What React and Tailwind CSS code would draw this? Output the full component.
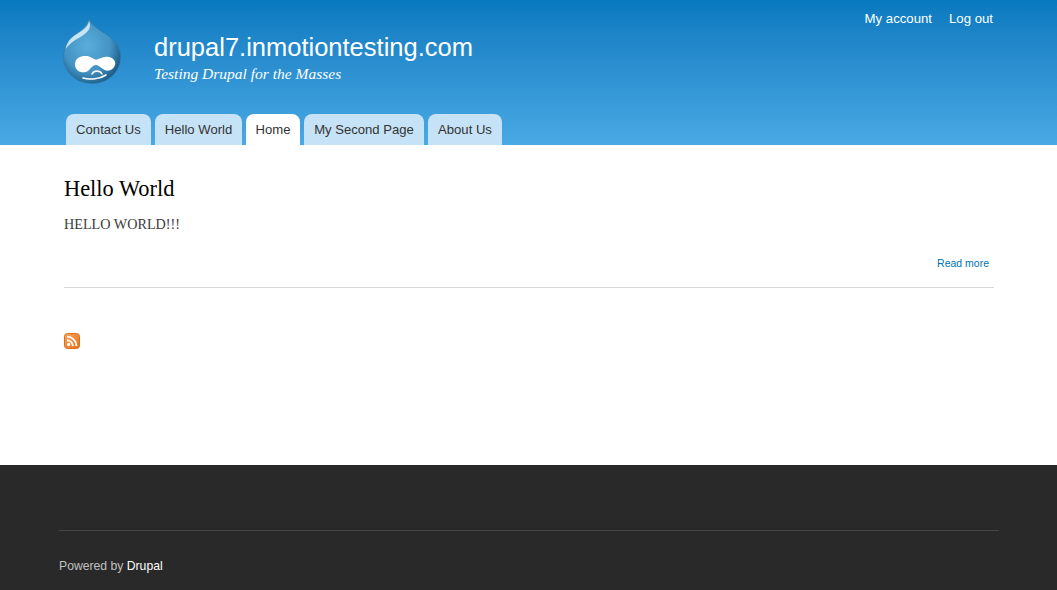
const sans = "font-['Liberation_Sans',Arial,sans-serif]";
const serif = "font-['Liberation_Serif','Times_New_Roman',serif]";

function Logo() {
  return (
    <svg width="60" height="68" viewBox="0 0 60 68" className="block">
      <defs>
        <radialGradient id="drop" cx="0.42" cy="0.42" r="0.62">
          <stop offset="0" stopColor="#5aaedb" />
          <stop offset="0.65" stopColor="#4393c4" />
          <stop offset="1" stopColor="#1d5f8a" />
        </radialGradient>
      </defs>
      <path d="M26 0 C27 6 34 10 41 15 C51 21 57.500 28 57.500 39 C57.500 54 45 65.500 29 65.500 C13 65.500 0.500 54 0.500 39 C0.500 27 7 20 14 15 C20 11 25 7 26 0 Z" fill="url(#drop)" stroke="#2f78a4" strokeWidth="0.6" />
      <path d="M26 3 C25 9 20 12 14 16 C8 19 4 24 2.500 31 C8 24 14 21 19 18 C25 14 29 10 26 3 Z" fill="#d4ecf8" opacity="0.9" />
      <path d="M12 46 C12 40 18 37.500 24 38 C28 38.500 31 42 34 41.500 C38 40 42 38 46 39 C51 40 53 44 52 47 C50 53 44 54 40 51 C37 49 35 47 33 47 C30 47 28 50 25 53 C20 56 12 54 12 46 Z" fill="#fff" />
      <path d="M20 60 C27 62 37 61 43 57" fill="none" stroke="#fff" strokeWidth="1.600" strokeLinecap="round" />
      <path d="M29 56 C31 52 37 52 39 56" fill="none" stroke="#fff" strokeWidth="1.500" strokeLinecap="round" />
    </svg>
  );
}

function Rss() {
  return (
    <svg width="16" height="16" viewBox="0 0 16 16" className="block">
      <defs>
        <linearGradient id="rss" x1="0" y1="0" x2="1" y2="1">
          <stop offset="0" stopColor="#f9a35a" />
          <stop offset="1" stopColor="#e8731c" />
        </linearGradient>
      </defs>
      <rect x="0.5" y="0.5" width="15" height="15" rx="3" fill="url(#rss)" stroke="#d9701f" />
      <circle cx="4.6" cy="11.4" r="1.6" fill="#fff" />
      <path d="M3 7.2 A5.8 5.8 0 0 1 8.8 13" fill="none" stroke="#fff" strokeWidth="1.9" />
      <path d="M3 3.6 A9.4 9.4 0 0 1 12.4 13" fill="none" stroke="#fff" strokeWidth="1.9" />
    </svg>
  );
}

const tabs = [
  ["Contact Us", "w-[85px]", false],
  ["Hello World", "w-[87px]", false],
  ["Home", "w-[54px]", true],
  ["My Second Page", "w-[120px]", false],
  ["About Us", "w-[74px]", false],
];

export default function App() {
  return (
    <div className={`${sans} w-full min-h-[590px] bg-white`}>
      <header className="h-[145px] bg-gradient-to-b from-[#0779bf] to-[#48a9e4] flex flex-col">
        <div className="h-[114px] pl-[63px] pr-[64px] flex items-start">
          <div className="mt-[18px]"><Logo /></div>
          <div className="ml-[31px] mt-[32px] text-white">
            <div className="text-[25.5px] leading-[30px]">drupal7.inmotiontesting.com</div>
            <div className={`${serif} italic text-[15.5px] leading-[18px] mt-[3px]`}>Testing Drupal for the Masses</div>
          </div>
          <nav className="ml-auto mt-[11px] flex gap-[17px] text-white text-[13.2px] leading-[16px]">
            <span>My account</span>
            <span>Log out</span>
          </nav>
        </div>
        <nav className="h-[31px] pl-[66px] flex gap-[4px] text-[13.1px]">
          {tabs.map(([t, w, active]) => (
            <span
              key={t}
              className={`${w} h-[31px] text-center whitespace-nowrap leading-[31px] rounded-t-[8px] text-[#333] ${active ? "bg-white" : "bg-[#c5e2f6]"}`}
            >
              {t}
            </span>
          ))}
        </nav>
      </header>
      <main className="h-[320px] pl-[64px] pr-[63px]">
        <h2 className={`${serif} text-[22.4px] leading-[26px] text-black pt-[31px] box-content`}>Hello World</h2>
        <p className={`${serif} text-[14.2px] leading-[20px] text-[#3b3b3b] mt-[12px]`}>HELLO WORLD!!!</p>
        <div className="mt-[22px] pb-[17px] pr-[5px] text-right text-[10.5px] leading-[14px] text-[#0071b3] border-b border-[#d6d6d6]">Read more</div>
        <div className="mt-[45px]"><Rss /></div>
      </main>
      <footer className="h-[125px] bg-[#292929] pl-[59px] pr-[58px] pt-[65px]">
        <div className="border-t border-[#444] pt-[27px] text-[12.2px] leading-[16px] text-[#c0c0c0]">
          Powered by <span className="text-[#fcfcfc]">Drupal</span>
        </div>
      </footer>
    </div>
  );
}
